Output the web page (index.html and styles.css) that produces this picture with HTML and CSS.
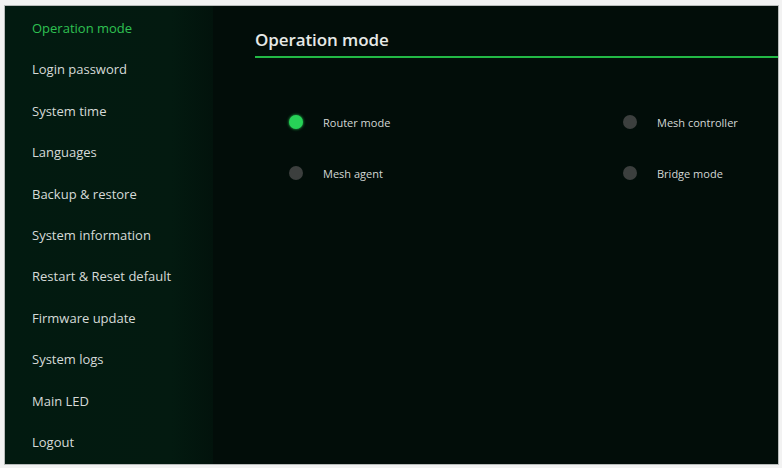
FILE: index.html
```html
<!DOCTYPE html>
<html>
<head>
<meta charset="utf-8">
<link rel="stylesheet" href="styles.css">
</head>
<body>
<div class="frame">
  <nav class="sidebar">
    <a class="item active">Operation mode</a>
    <a class="item">Login password</a>
    <a class="item">System time</a>
    <a class="item">Languages</a>
    <a class="item">Backup &amp; restore</a>
    <a class="item">System information</a>
    <a class="item">Restart &amp; Reset default</a>
    <a class="item">Firmware update</a>
    <a class="item">System logs</a>
    <a class="item">Main LED</a>
    <a class="item">Logout</a>
  </nav>
  <main class="content">
    <h1 class="title">Operation mode</h1>
    <div class="modes">
      <div class="opt"><span class="dot on"></span><span class="lbl">Router mode</span></div>
      <div class="opt"><span class="dot"></span><span class="lbl">Mesh controller</span></div>
      <div class="opt"><span class="dot"></span><span class="lbl">Mesh agent</span></div>
      <div class="opt"><span class="dot"></span><span class="lbl">Bridge mode</span></div>
    </div>
  </main>
</div>
</body>
</html>
```
FILE: styles.css
```css
html, body {
  margin: 0;
  padding: 0;
  background: #f2f2f2;
}
body {
  padding: 6px 4px 4px 5px;
  width: 782px;
  height: 468px;
  box-sizing: border-box;
  font-family: "Open Sans", "Noto Sans", sans-serif;
}
.frame {
  display: flex;
  height: 458px;
  background: #020d09;
  box-shadow: 0 0 0 1px #b9bcbb;
}
.sidebar {
  width: 208px;
  flex: none;
  display: flex;
  flex-direction: column;
  padding-top: 2px;
  background: linear-gradient(to right, #021a10 0%, #031a10 80%, #02130c 100%);
}
.item {
  height: 41.4px;
  line-height: 41.4px;
  padding-left: 27px;
  font-size: 13px;
  color: #d6dad8;
}
.item.active {
  color: #2fc152;
}
.content {
  flex: 1;
  padding-left: 42px;
}
.title {
  margin: 0;
  padding-top: 22px;
  height: 28px;
  line-height: 24px;
  font-size: 17px;
  font-weight: 600;
  color: #e6e9e7;
  border-bottom: 2px solid #22b845;
  letter-spacing: -0.1px;
}
.modes {
  display: grid;
  grid-template-columns: 334px 1fr;
  row-gap: 37px;
  padding-top: 57px;
  padding-left: 34px;
}
.opt {
  display: flex;
  align-items: center;
  height: 14px;
}
.dot {
  width: 14px;
  height: 14px;
  border-radius: 50%;
  background: #3c3f3e;
  margin-right: 20px;
}
.dot.on {
  background: #27d157;
  box-shadow: 0 0 3px #27d157;
}
.lbl {
  font-size: 11px;
  color: #d3d7d5;
}
```
